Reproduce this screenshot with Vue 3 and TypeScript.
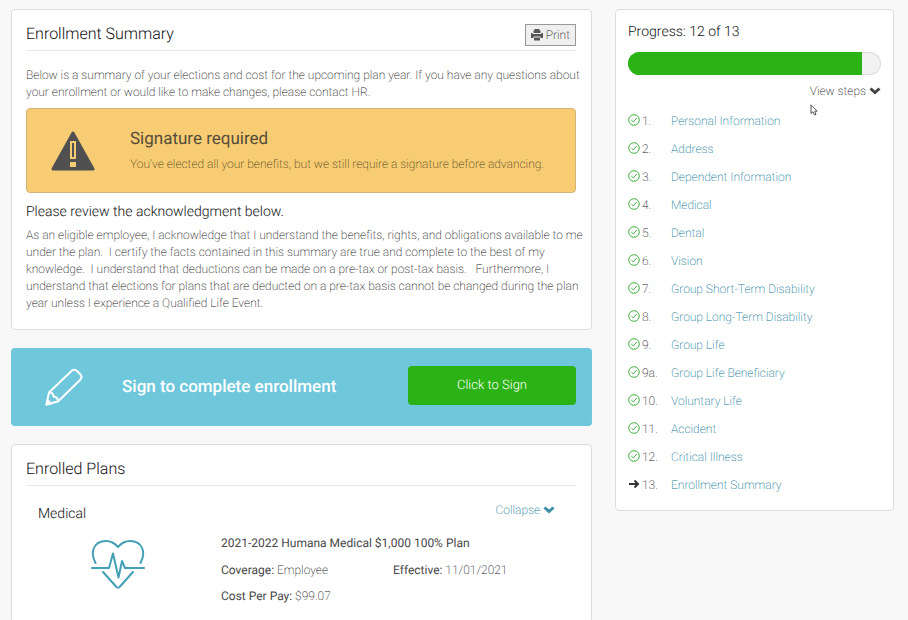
<script setup lang="ts">
interface Step {
  no: string
  label: string
  done: boolean
}

const steps: Step[] = [
  { no: '1.', label: 'Personal Information', done: true },
  { no: '2.', label: 'Address', done: true },
  { no: '3.', label: 'Dependent Information', done: true },
  { no: '4.', label: 'Medical', done: true },
  { no: '5.', label: 'Dental', done: true },
  { no: '6.', label: 'Vision', done: true },
  { no: '7.', label: 'Group Short-Term Disability', done: true },
  { no: '8.', label: 'Group Long-Term Disability', done: true },
  { no: '9.', label: 'Group Life', done: true },
  { no: '9a.', label: 'Group Life Beneficiary', done: true },
  { no: '10.', label: 'Voluntary Life', done: true },
  { no: '11.', label: 'Accident', done: true },
  { no: '12.', label: 'Critical Illness', done: true },
  { no: '13.', label: 'Enrollment Summary', done: false },
]

const current = 12
const total = 13
const percent = (current / total) * 100
</script>

<template>
  <div class="page">
    <main class="main">
      <section class="card summary">
        <header class="card-head">
          <h1 class="title">Enrollment Summary</h1>
          <button type="button" class="print">
            <svg class="print-icon" viewBox="0 0 24 24" aria-hidden="true">
              <path d="M7 0h10v3h2v5H5V3h2z" />
              <path d="M0 8h3v2h18V8h3v10h-5v-3H5v3H0z" />
              <path d="M6 17h12v6H6z" />
            </svg>
            Print
          </button>
        </header>
        <p class="body">
          Below is a summary of your elections and cost for the upcoming plan year. If you have any questions about
          your enrollment or would like to make changes, please contact HR.
        </p>
        <div class="alert" role="alert">
          <svg class="alert-icon" viewBox="0 0 44 40" aria-hidden="true">
            <path class="tri" d="M22 2 L42 38 H2 Z" />
            <path class="bang" d="M19 10h6v18h-6zM19 31h6v5h-6z" />
            <path class="bang-core" d="M21 12h2v14h-2z" />
          </svg>
          <div>
            <h2 class="title alert-title">Signature required</h2>
            <p class="alert-text">You've elected all your benefits, but we still require a signature before advancing.</p>
          </div>
        </div>
        <h3 class="subtitle">Please review the acknowledgment below.</h3>
        <p class="body">
          As an eligible employee, I acknowledge that I understand the benefits, rights, and obligations available to me
          under the plan.&nbsp; I certify the facts contained in this summary are true and complete to the best of my
          knowledge.&nbsp; I understand that deductions can be made on a pre-tax or post-tax basis.&nbsp;&nbsp; Furthermore, I
          understand that elections for plans that are deducted on a pre-tax basis cannot be changed during the plan
          year unless I experience a Qualified Life Event.
        </p>
      </section>

      <section class="sign">
        <svg class="pencil" viewBox="0 0 38 38" aria-hidden="true">
          <path d="M4 24.500 27 2.500Q29.500 0.800 32 3L35.500 6.500Q37.500 9 35.500 11.500L13 33.500 1.500 36.500Z" />
          <path d="M4 24.500Q8 24 8.500 28.500Q13 29 13 33.500" />
          <path class="tip" d="M2.500 32 6 35.500 1.500 36.500Z" />
        </svg>
        <h2 class="title sign-title">Sign to complete enrollment</h2>
        <button type="button" class="sign-btn">Click to Sign</button>
      </section>

      <section class="card plans">
        <header class="card-head">
          <h2 class="title">Enrolled Plans</h2>
        </header>
        <div class="plan">
          <div class="plan-head">
            <h3 class="subtitle plan-kind">Medical</h3>
            <a href="#" class="collapse">
              Collapse
              <svg class="chevron" viewBox="0 0 12 8" aria-hidden="true"><path d="M1.500 1.500 6 5.500 10.500 1.500" /></svg>
            </a>
          </div>
          <div class="plan-body">
            <svg class="heart" viewBox="0 0 54 52" aria-hidden="true">
              <path d="M4.500 24C-1 14 2 2 15 2C20.500 2 24 4.500 27 8C30 4.500 33.500 2 39 2C52 2 55 14 49.500 24" />
              <path d="M1 29H18L22 14.500 27.500 38.500 31 22 34 29H53" />
              <path d="M12 33 25 47.500Q27 50 29 47.500L42 33" />
            </svg>
            <div class="plan-info">
              <h4 class="plan-name">2021-2022 Humana Medical $1,000 100% Plan</h4>
              <dl class="facts">
                <div><dt>Coverage:</dt> <dd>Employee</dd></div>
                <div><dt>Effective:</dt> <dd>11/01/2021</dd></div>
                <div><dt>Cost Per Pay:</dt> <dd>$99.07</dd></div>
              </dl>
            </div>
          </div>
        </div>
      </section>
    </main>

    <aside class="card progress">
      <h2 class="subtitle">Progress: {{ current }} of {{ total }}</h2>
      <div class="bar" role="progressbar" :aria-valuenow="current" aria-valuemin="0" :aria-valuemax="total">
        <div class="fill" :style="{ width: percent + '%' }"></div>
      </div>
      <button type="button" class="view">
        View steps
        <svg class="chevron" viewBox="0 0 12 8" aria-hidden="true"><path d="M1.500 1.500 6 5.500 10.500 1.500" /></svg>
        <svg class="cursor" viewBox="0 0 8 12" aria-hidden="true">
          <path d="M1 0.800V9.500L3 7.800 4.500 11 6 10.300 4.700 7.200H7.200Z" />
        </svg>
      </button>
      <ol class="steps">
        <li v-for="step in steps" :key="step.no" class="step">
          <svg v-if="step.done" class="check" viewBox="0 0 12 12" aria-hidden="true">
            <circle cx="6" cy="6" r="5.300" />
            <path d="M3.500 6.200 5.300 8 8.700 4" />
          </svg>
          <svg v-else class="arrow" viewBox="0 0 12 12" aria-hidden="true">
            <path d="M1 6H10M6.500 2.500 10 6 6.500 9.500" />
          </svg>
          <span class="no">{{ step.no }}</span>
          <a href="#">{{ step.label }}</a>
        </li>
      </ol>
    </aside>
  </div>
</template>

<style>
body {
  margin: 0;
  background: #f8f8f8;
}
</style>

<style scoped>
.page {
  display: grid;
  grid-template-columns: minmax(0, 581fr) minmax(0, 279fr);
  gap: 23px;
  align-items: start;
  padding: 9px 14px 0 11px;
  height: 100vh;
  overflow: hidden;
  box-sizing: border-box;
  font-family: Roboto, "Liberation Sans", sans-serif;
  font-size: 12px;
  font-weight: 200;
  line-height: 17px;
  color: #222;
  text-rendering: geometricPrecision;
}

h1, h2, h3, h4, p, ol, dl, dd {
  margin: 0;
  padding: 0;
}

button {
  font: inherit;
  color: inherit;
  text-rendering: inherit;
  cursor: pointer;
}

a {
  color: #0f7896;
  text-decoration: none;
}

.main {
  display: flex;
  flex-direction: column;
  gap: 18px;
}

.card {
  background: #fff;
  border: 1px solid #dcdcdc;
  border-radius: 4px;
}

.summary,
.plans {
  padding: 12px 15px 17px 14px;
}

.card-head {
  display: flex;
  align-items: flex-start;
  justify-content: space-between;
  height: 28px;
  border-bottom: 1px solid #e8e8e8;
}

.title {
  font-size: 16px;
  line-height: 24px;
  font-weight: 300;
  color: #111;
}

.subtitle {
  font-size: 14px;
  line-height: 20px;
  font-weight: 300;
  color: #111;
}

.print {
  display: flex;
  align-items: center;
  gap: 3px;
  height: 22px;
  margin-top: 2px;
  padding: 0 5px;
  border: 1px solid #999;
  border-radius: 0;
  background: #efefef;
}

.print-icon {
  width: 12px;
  height: 12px;
  fill: #555;
}

.body {
  margin-right: -10px;
}

.card-head + .body {
  margin-top: 16px;
  margin-bottom: 7px;
}

.alert {
  display: flex;
  align-items: center;
  gap: 35px;
  padding: 17px 24px;
  border: 1px solid #d3b57a;
  border-radius: 4px;
  background: #f7cc72;
  margin-bottom: 9px;
}

.alert-icon {
  flex: none;
  width: 44px;
  height: 40px;
}

.tri {
  fill: #505050;
  stroke: #505050;
  stroke-width: 3;
  stroke-linejoin: round;
}

.bang {
  fill: #f7cc72;
}

.bang-core {
  fill: #505050;
}

.alert-title,
.sign-title {
  font-size: 17px;
  font-weight: 400;
  color: #544c3a;
}

.alert-title {
  margin-top: 1px;
  margin-bottom: 5px;
}

.alert-text {
  margin-bottom: 2px;
  color: #4f421f;
}

.subtitle + .body {
  margin-top: 5px;
}

.sign {
  display: flex;
  align-items: center;
  height: 78px;
  padding: 0 16px 0 34px;
  border-radius: 4px;
  background: #6fc7dc;
}

.pencil {
  flex: none;
  width: 38px;
  height: 38px;
  margin-right: 39px;
  fill: none;
  stroke: #fff;
  stroke-width: 2;
  stroke-linejoin: round;
}

.pencil .tip {
  fill: #fff;
}

.sign-title {
  flex: 1;
  color: #fff;
  font-weight: 500;
}

.sign-btn {
  width: 168px;
  height: 39px;
  margin-bottom: 4px;
  border: 0;
  border-radius: 4px;
  background: #2bb215;
  color: #fff;
  font-size: 13px;
  font-weight: 300;
}

.plan {
  padding: 16px 21px 0 12px;
}

.plan-head {
  display: flex;
  align-items: flex-start;
  justify-content: space-between;
}

.plan-kind {
  margin-top: 2px;
}

.chevron {
  width: 12px;
  height: 8px;
  fill: none;
  stroke: currentColor;
  stroke-width: 3;
}

.collapse .chevron {
  stroke: #3d8ea8;
}

.plan-body {
  display: flex;
  gap: 76px;
  padding: 10px 0 0 53px;
}

.heart {
  flex: none;
  width: 54px;
  height: 52px;
  margin-top: 5px;
  fill: none;
  stroke: #43a0b5;
  stroke-width: 2;
  stroke-linecap: round;
  stroke-linejoin: round;
}

.plan-info {
  flex: 1;
}

.plan-name {
  margin-top: 1px;
  font-size: 12px;
  line-height: 17px;
  font-weight: 400;
  color: #484848;
}

.facts {
  display: grid;
  grid-template-columns: repeat(2, 172px);
  gap: 9px 0;
  margin-top: 10px;
}

dt,
dd {
  display: inline;
}

dt {
  font-weight: 400;
  color: #484848;
}

.progress {
  display: flex;
  flex-direction: column;
  padding: 12px 12px 11px;
}

.bar {
  height: 23px;
  margin-top: 10px;
  border-radius: 12px;
  overflow: hidden;
  background: #f2f2f2;
  box-shadow: inset 0 0 0 1px #ddd;
}

.fill {
  height: 100%;
  background: #2bb215;
}

.view {
  position: relative;
  align-self: flex-end;
  margin-top: 8px;
  padding: 0;
  border: 0;
  background: none;
}

.view .chevron {
  stroke: #444;
}

.cursor {
  position: absolute;
  left: 0;
  top: 21px;
  width: 8px;
  height: 12px;
  fill: #fff;
  stroke: #555;
}

.steps {
  list-style: none;
  margin-top: 7px;
}

.step {
  display: grid;
  grid-template-columns: 14px 29px 1fr;
  align-items: center;
  height: 28px;
}

.check,
.arrow {
  width: 12px;
  height: 12px;
  margin-bottom: 2px;
  fill: none;
  stroke: #43ae3f;
}

.arrow {
  stroke: #333;
  stroke-width: 2;
}
</style>
